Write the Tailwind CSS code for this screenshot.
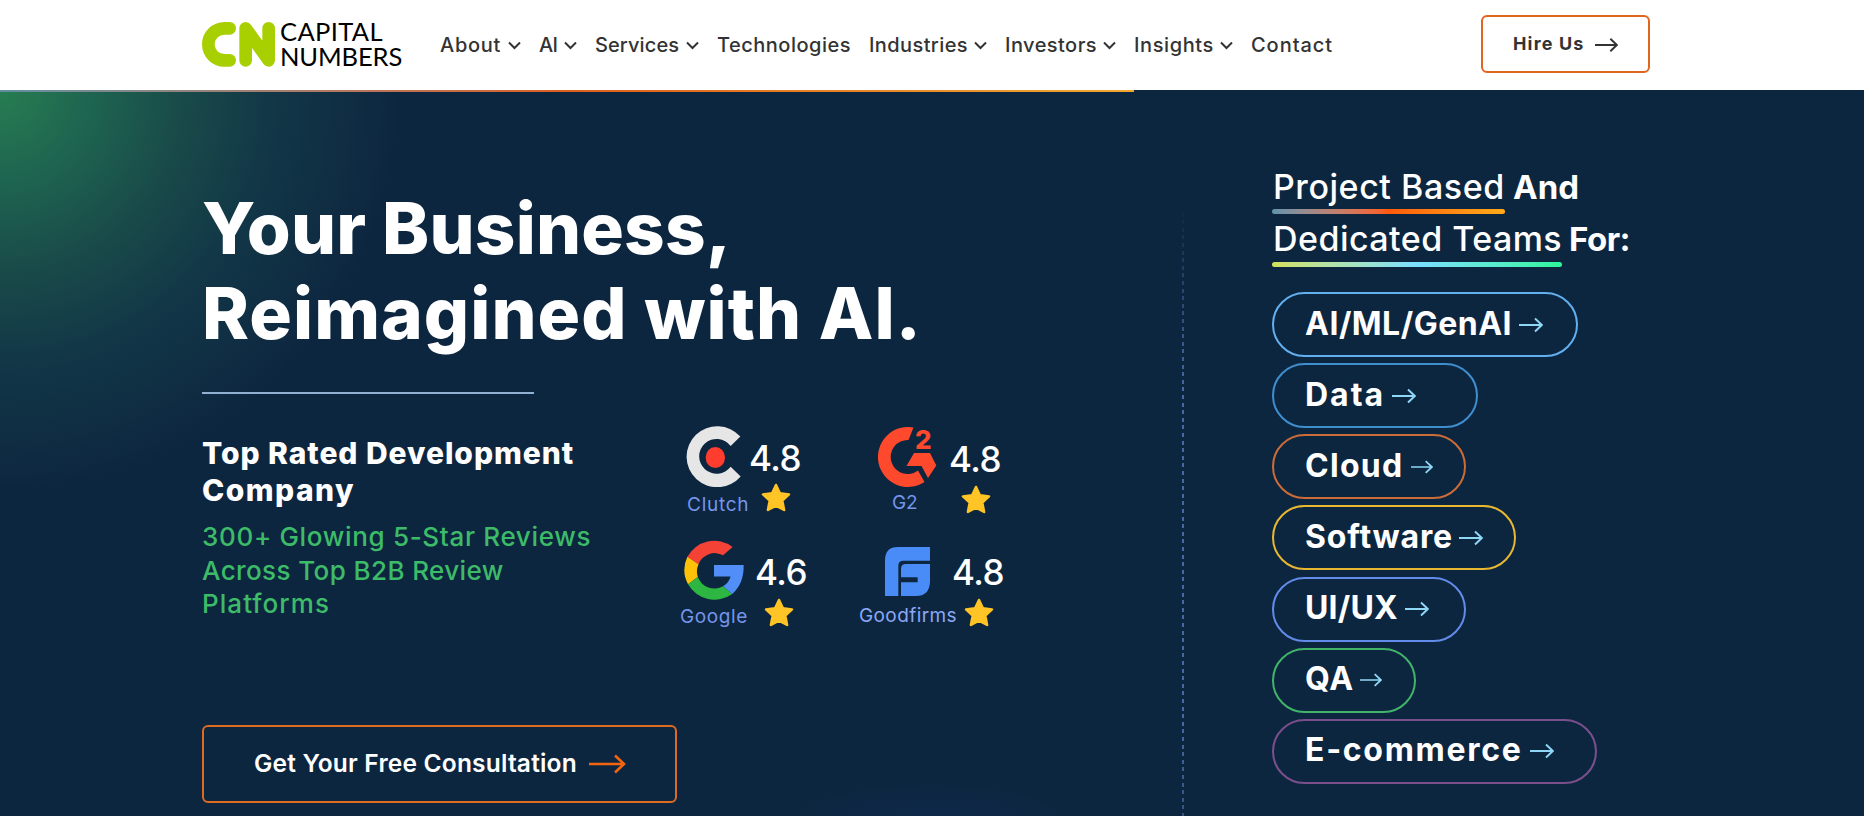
<!DOCTYPE html>
<html lang="en">

<head>
    <meta charset="UTF-8" />
    <title>Capital Numbers</title>
    <meta name="viewport" content="width=device-width, initial-scale=1.0" />
    <script src="https://cdn.jsdelivr.net/npm/@tailwindcss/browser@4"></script>
</head>

<body class="h-[816px] overflow-hidden bg-[#0d2640] font-['Inter',sans-serif]">
    <!-- shared symbols -->
    <svg class="hidden">
        <symbol id="chevron" viewBox="0 0 13 9">
            <path d="M1 1.500l5.500 5.500 5.500-5.500" fill="none" stroke="currentColor" stroke-width="2" />
        </symbol>
        <symbol id="arrow" viewBox="0 0 24 16">
            <path d="M0 8h22.500M16 1.500l6.800 6.500-6.800 6.500" fill="none" stroke="currentColor" stroke-width="1.900" />
        </symbol>
        <symbol id="star" viewBox="0 0 30 29">
            <path d="M15 2l3.900 8.200 9.100 1.200-6.700 6.200 1.800 9.400L15 22.700 6.900 27l1.800-9.400L2 11.400l9.100-1.200z" fill="#ffc425" stroke="#ffc425" stroke-width="2.500" stroke-linejoin="round" />
        </symbol>
    </svg>

    <header class="h-[90px] pb-px bg-white">
        <div class="ml-[202px] w-[1448px] h-full flex items-center">
            <a href="#" class="flex items-center">
                <svg class="w-[73px] h-[45px]" viewBox="66 66 219 135" fill="none" stroke="#a8cf00" stroke-width="38" stroke-linecap="round" stroke-linejoin="round">
                    <path d="M149 85H133A48 48 0 0 0 133 181H149" />
                    <path d="M197 181V85L266 181V85" />
                </svg>
                <span class="ml-[5px] w-[122px] mt-[-1px] font-['Lato',sans-serif] text-[25.5px] leading-[25px] text-black whitespace-nowrap">
                    <span class="block tracking-[0.37px]">CAPITAL</span>
                    <span class="block tracking-[-0.1px]">NUMBERS</span>
                </span>
            </a>
            <nav class="ml-[38px] flex gap-[18px] text-[20px] leading-7 font-medium text-[#333333] whitespace-nowrap">
                <a class="w-[81px] flex items-center justify-between"><span class="tracking-[0.7px]">About</span><svg class="w-[13px] h-[9px] mt-[2px]"><use href="#chevron" /></svg></a>
                <a class="w-[38px] flex items-center justify-between"><span class="tracking-[-0.8px]">AI</span><svg class="w-[13px] h-[9px] mt-[2px]"><use href="#chevron" /></svg></a>
                <a class="w-[104px] flex items-center justify-between"><span class="tracking-[0.1px]">Services</span><svg class="w-[13px] h-[9px] mt-[2px]"><use href="#chevron" /></svg></a>
                <a class="w-[134px] tracking-[0.5px]">Technologies</a>
                <a class="w-[118px] flex items-center justify-between"><span class="tracking-[0.4px]">Industries</span><svg class="w-[13px] h-[9px] mt-[2px]"><use href="#chevron" /></svg></a>
                <a class="w-[111px] flex items-center justify-between"><span class="tracking-[0.45px]">Investors</span><svg class="w-[13px] h-[9px] mt-[2px]"><use href="#chevron" /></svg></a>
                <a class="w-[99px] flex items-center justify-between"><span class="tracking-[0.6px]">Insights</span><svg class="w-[13px] h-[9px] mt-[2px]"><use href="#chevron" /></svg></a>
                <a class="w-[82px] tracking-[0.95px]">Contact</a>
            </nav>
            <a class="ml-auto w-[169px] h-[58px] mb-[2px] flex items-center pl-[30px] rounded-md border-2 border-[#e2651d] text-[#333333]">
                <span class="w-[82px] text-[18px] font-bold tracking-[1.150px] whitespace-nowrap">Hire Us</span>
                <svg class="w-[23px] h-4 mt-[2px]" viewBox="0 0 24 16"><path d="M0 8h22M16 1.500l6.800 6.500-6.800 6.500" fill="none" stroke="#333333" stroke-width="2" /></svg>
            </a>
        </div>
    </header>

    <main class="h-[726px] bg-[radial-gradient(circle_400px_at_0px_0px,#277d51_0%,#1e6450_23%,#194a49_46%,#123747_68%,#0d2640_100%)]">
        <div class="h-full bg-[radial-gradient(ellipse_130px_32px_at_930px_726px,#0e284b_0%,transparent_100%)]">
            <!-- scroll progress -->
            <div class="w-[1134px] h-[2px] bg-linear-to-r from-[#5f8ea0] via-[#dd5e1c] to-[#f0a830]"></div>

            <div class="pl-[202px] h-[724px] flex">
                <section class="w-[980px] pt-[94px]">
                    <h1 class="text-[71px] leading-[85px] font-extrabold text-white whitespace-nowrap">
                        <span class="block tracking-[0.2px]">Your Business,</span>
                        <span class="block tracking-[1.05px]">Reimagined with AI.</span>
                    </h1>
                    <div class="mt-[36px] w-[332px] h-[2px] bg-[#8fb0d0]"></div>

                    <div class="flex mt-[32px] h-[299px] whitespace-nowrap">
                        <div class="w-[478px] pt-[9px]">
                            <h2 class="text-[30px] leading-[37px] font-extrabold text-white">
                                <span class="block tracking-[0.950px]">Top Rated Development</span>
                                <span class="block tracking-[1.450px]">Company</span>
                            </h2>
                            <p class="mt-[11px] text-[26px] leading-[33.500px] font-medium text-[#3dbb68]">
                                <span class="block tracking-[0.670px]">300+ Glowing 5-Star Reviews</span>
                                <span class="block tracking-[0.400px]">Across Top B2B Review</span>
                                <span class="block tracking-[1.050px]">Platforms</span>
                            </p>
                        </div>

                        <!-- review platforms -->
                        <div class="grid grid-cols-[179px_160px] grid-rows-[114px_114px] text-[19px] leading-5 text-[#7595ea]">
                            <div class="flex">
                                <div class="w-[69px] pl-[4px]">
                                    <svg class="w-[58px] h-[61px]" viewBox="72 48 174 184" preserveAspectRatio="none">
                                        <path d="M241 80A92 92 0 1 0 242 200L212 171A52.500 52.500 0 1 1 212 108Z" fill="#e6e6e6" />
                                        <ellipse cx="166" cy="143" rx="29" ry="32" fill="#ff3d2e" />
                                    </svg>
                                    <p class="mt-[8px] ml-[3px] tracking-[0.750px]">Clutch</p>
                                </div>
                                <div class="pt-[12px]">
                                    <p class="text-[35px] leading-10 tracking-[-0.500px] font-medium text-white">4.8</p>
                                    <svg class="mt-[5px] ml-[12px] w-[30px] h-[29px]"><use href="#star" /></svg>
                                </div>
                            </div>
                            <div class="flex">
                                <div class="w-[90px] pl-[19px] pt-px">
                                    <svg class="w-[60px] h-[60px]" viewBox="8 12 60 60" fill="#ff492c">
                                        <path d="M43.500 12.500L38.500 25A17 17 0 1 0 48 55.500L54.500 67A30 30 0 1 1 43.500 12.500Z" />
                                        <path d="M44 38H60L66.300 50.500L58 63L51.500 51H36.500Z" />
                                        <text x="45" y="34" font-size="26" font-weight="800" font-family="Inter">2</text>
                                    </svg>
                                    <p class="mt-[6px] ml-[14px] tracking-[-0.200px]">G2</p>
                                </div>
                                <div class="pt-[13px]">
                                    <p class="text-[35px] leading-10 tracking-[-0.500px] font-medium text-white">4.8</p>
                                    <svg class="mt-[6px] ml-[12px] w-[30px] h-[29px]"><use href="#star" /></svg>
                                </div>
                            </div>
                            <div class="flex">
                                <div class="w-[75px]">
                                    <svg class="ml-[3px] w-[61px] h-[61px]" viewBox="71 390 181 181">
                                        <path d="M218 411A90 90 0 0 0 84 440L117 462A52 52 0 0 1 190 435Z" fill="#f44336" />
                                        <path d="M84 440A90 90 0 0 0 86 521L115 500A52 52 0 0 1 117 462Z" fill="#ffc107" />
                                        <path d="M86 521A90 90 0 0 0 217 550L190 527A52 52 0 0 1 115 500Z" fill="#2db742" />
                                        <path d="M217 550Q252 520 251 464H163V498H212Q208 516 190 527Z" fill="#518ef8" />
                                    </svg>
                                    <p class="mt-[6px] tracking-[0.600px]">Google</p>
                                </div>
                                <div class="pt-[12px]">
                                    <p class="text-[35px] leading-10 tracking-[-0.500px] font-medium text-white">4.6</p>
                                    <svg class="mt-[6px] ml-[9px] w-[30px] h-[29px]"><use href="#star" /></svg>
                                </div>
                            </div>
                            <div class="flex">
                                <div class="w-[93px] pt-[7px]">
                                    <svg class="ml-[26px] w-[45px] h-[49px]" viewBox="675 410 135 147">
                                        <path d="M675 557V450Q675 410 714 410H810V451H730Q715 451 715 466V557Z" fill="#4a8cf7" />
                                        <path d="M723 557V476Q723 461 738 461H810V515Q808 557 768 557ZM723 501V516H773V501Z" fill="#4a8cf7" fill-rule="evenodd" />
                                    </svg>
                                    <p class="mt-[10px] tracking-[0.400px] text-[#8ba7f5]">Goodfirms</p>
                                </div>
                                <div class="pt-[12px]">
                                    <p class="text-[35px] leading-10 tracking-[-0.500px] font-medium text-white">4.8</p>
                                    <svg class="mt-[6px] ml-[12px] w-[30px] h-[29px]"><use href="#star" /></svg>
                                </div>
                            </div>
                        </div>
                    </div>

                    <a class="w-[475px] h-[78px] flex items-center pl-[50px] rounded-md border-2 border-[#e06a20] text-white">
                        <span class="w-[335px] mb-px text-[24.500px] font-semibold tracking-[0.200px] whitespace-nowrap">Get Your Free Consultation</span>
                        <svg class="w-[37px] h-5" viewBox="0 0 37 20"><path d="M0 10h35M26 1.500l9 8.500-9 8.500" fill="none" stroke="#f2640f" stroke-width="2.600" /></svg>
                    </a>
                </section>

                <!-- dashed divider -->
                <div class="w-[2px] mt-[113px] bg-[repeating-linear-gradient(to_bottom,#47699f_0px,#47699f_4px,transparent_4px,transparent_7.600px)] [mask-image:linear-gradient(to_bottom,transparent,black_180px,black_520px,#000a_611px)]"></div>

                <section class="ml-[88px] pt-[75px] text-white whitespace-nowrap">
                    <div class="flex text-[33px] leading-10">
                        <div class="w-[233px] pb-[5px] font-medium">
                            <p class="pl-px text-[34px] tracking-[0.550px]">Project Based</p>
                            <div class="mt-[2px] h-[5px] rounded-full bg-linear-to-r from-[#5f93ad] via-[#ff5a0a] to-[#ffab1a]"></div>
                        </div>
                        <p class="ml-[8px] font-bold">And</p>
                    </div>
                    <div class="flex text-[33px] leading-10">
                        <div class="w-[290px] font-medium">
                            <p class="pl-px text-[34px] tracking-[0.450px]">Dedicated Teams</p>
                            <div class="mt-[3px] h-[5px] rounded-full bg-linear-to-r from-[#d4e157] via-[#7adfff] to-[#2bf59a]"></div>
                        </div>
                        <p class="ml-[7px] font-bold tracking-[-0.500px]">For:</p>
                    </div>

                    <div class="mt-[25px] flex flex-col gap-[6.170px] text-[32px] font-bold text-white">
                        <a class="w-[306px] h-[65px] flex items-center pl-[31px] rounded-full border-2 border-[#62b0f0]">
                            <span class="w-[214px] mb-[2px] tracking-[0.500px]">AI/ML/GenAI</span>
                            <svg class="w-6 h-4 text-[#8fd8f5]"><use href="#arrow" /></svg>
                        </a>
                        <a class="w-[206px] h-[65px] flex items-center pl-[31px] rounded-full border-2 border-[#3f8fcf]">
                            <span class="w-[87px] mb-[2px] tracking-[2px]">Data</span>
                            <svg class="w-6 h-4 text-[#8fd8f5]"><use href="#arrow" /></svg>
                        </a>
                        <a class="w-[194px] h-[65px] flex items-center pl-[31px] rounded-full border-2 border-[#cc6c38]">
                            <span class="w-[106px] mb-[2px] tracking-[1.300px]">Cloud</span>
                            <svg class="w-[22px] h-4 text-[#8fd8f5]"><use href="#arrow" /></svg>
                        </a>
                        <a class="w-[244px] h-[65px] flex items-center pl-[31px] rounded-full border-2 border-[#e8b830]">
                            <span class="w-[154px] mb-[2px] tracking-[0.800px]">Software</span>
                            <svg class="w-6 h-4 text-[#8fd8f5]"><use href="#arrow" /></svg>
                        </a>
                        <a class="w-[194px] h-[65px] flex items-center pl-[31px] rounded-full border-2 border-[#628bea]">
                            <span class="w-[100px] mb-[2px] tracking-[0.200px]">UI/UX</span>
                            <svg class="w-6 h-4 text-[#8fd8f5]"><use href="#arrow" /></svg>
                        </a>
                        <a class="w-[144px] h-[65px] flex items-center pl-[31px] rounded-full border-2 border-[#42b46a]">
                            <span class="w-[55px] mb-[2px] tracking-[0.800px]">QA</span>
                            <svg class="w-[22px] h-4 text-[#8fd8f5]"><use href="#arrow" /></svg>
                        </a>
                        <a class="w-[325px] h-[65px] flex items-center pl-[31px] rounded-full border-2 border-[#7b4f8c]">
                            <span class="w-[225px] mb-[2px] tracking-[1.700px]">E-commerce</span>
                            <svg class="w-6 h-4 text-[#8fd8f5]"><use href="#arrow" /></svg>
                        </a>
                    </div>
                </section>
            </div>
        </div>
    </main>
</body>

</html>
